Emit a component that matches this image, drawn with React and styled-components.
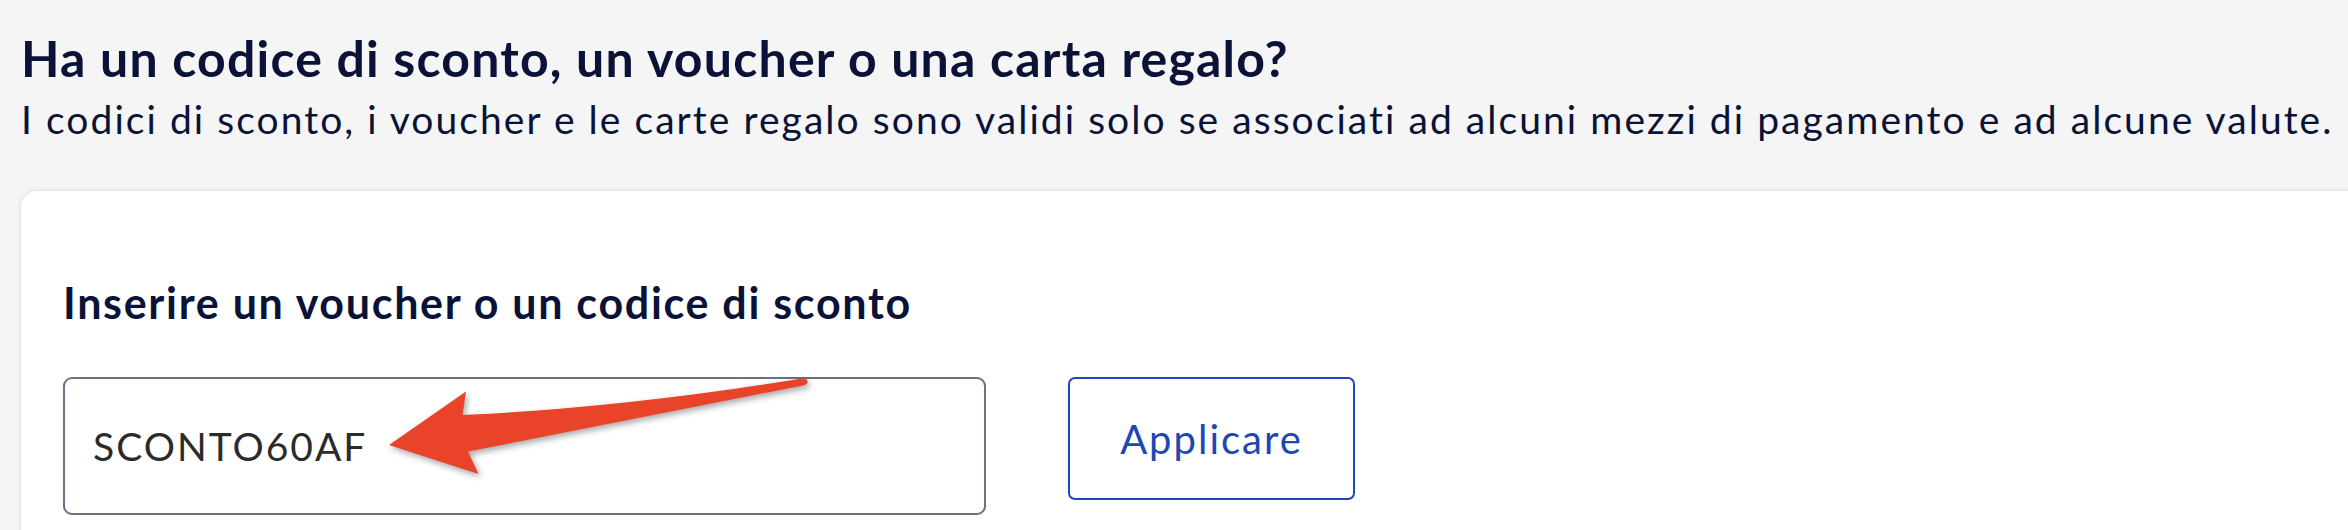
import React from "react";
import styled, { createGlobalStyle } from "styled-components";

const GlobalStyle = createGlobalStyle`
  html, body {
    margin: 0;
    padding: 0;
    background: #f5f5f5;
    overflow: hidden;
  }
  body {
    font-family: Lato, "Liberation Sans", sans-serif;
  }
`;

const Page = styled.div`
  width: 2348px;
  height: 530px;
  padding: 28px 0 0 21px;
  box-sizing: border-box;
  overflow: hidden;
`;

const Title = styled.h2`
  margin: 0;
  font-size: 50px;
  line-height: 60px;
  font-weight: 700;
  letter-spacing: 1.2px;
  color: #0a1237;
`;

const Subtitle = styled.p`
  margin: 8px 0 0;
  font-size: 39px;
  line-height: 47px;
  font-weight: 400;
  letter-spacing: 2.05px;
  color: #0a1237;
  white-space: nowrap;
`;

const Card = styled.section`
  margin-top: 48px;
  margin-right: -40px;
  background: #fff;
  border-radius: 16px;
  box-shadow: 0 0 5px rgba(0, 0, 0, 0.13);
  padding: 87px 0 40px 42px;
  min-height: 400px;
`;

const Label = styled.h3`
  margin: 0;
  font-size: 43px;
  line-height: 50px;
  font-weight: 700;
  letter-spacing: 1.7px;
  color: #0a1237;
`;

const InputRow = styled.div`
  position: relative;
  margin-top: 49px;
  display: flex;
  align-items: flex-start;
  gap: 82px;
`;

const CodeInput = styled.div`
  width: 923px;
  height: 138px;
  box-sizing: border-box;
  border: 2px solid #6d7080;
  border-radius: 9px;
  display: flex;
  align-items: center;
  padding-left: 28px;
  font-size: 39px;
  letter-spacing: 2px;
  color: #2b2b2b;
`;

const ApplyButton = styled.button`
  width: 287px;
  height: 123px;
  box-sizing: border-box;
  border: 2px solid #1e46b5;
  border-radius: 7px;
  background: #fff;
  color: #1e46b5;
  font-family: Lato, "Liberation Sans", sans-serif;
  font-size: 40px;
  letter-spacing: 2px;
  font-weight: 400;
  cursor: pointer;
`;

const Arrow = styled.svg`
  position: absolute;
  left: 307px;
  top: -17px;
  width: 460px;
  height: 140px;
  overflow: visible;
  filter: drop-shadow(2px 3px 3px rgba(0, 0, 0, 0.35));
`;

export default function App() {
  return (
    <>
      <GlobalStyle />
      <Page>
        <Title>Ha un codice di sconto, un voucher o una carta regalo?</Title>
        <Subtitle>
          I codici di sconto, i voucher e le carte regalo sono validi solo se associati ad alcuni mezzi di pagamento e ad alcune valute.
        </Subtitle>
        <Card>
          <Label>Inserire un voucher o un codice di sconto</Label>
          <InputRow>
            <CodeInput>SCONTO60AF</CodeInput>
            <ApplyButton type="button">Applicare</ApplyButton>
            <Arrow viewBox="0 0 460 140">
              <path
                d="M19 85 L96 31.5 L92.5 55 Q250 48 432 18.5 Q438 18.5 437.5 22 Q437 25 433 25.5 L98 91.5 L108.5 114 Z"
                fill="#e9432a"
              />
            </Arrow>
          </InputRow>
        </Card>
      </Page>
    </>
  );
}
